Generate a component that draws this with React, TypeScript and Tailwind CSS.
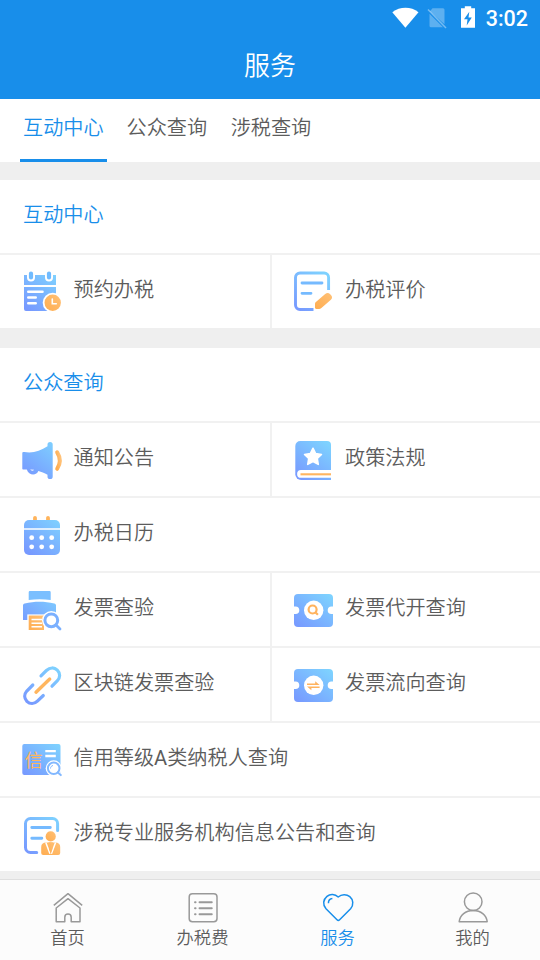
import { useState } from "react";
import type { ReactNode } from "react";

const BLUE = "url(#blue)";
const ORANGE = "url(#orange)";

const tabs = ["互动中心", "公众查询", "涉税查询"];

type Item = { label: ReactNode; key: string; icon: ReactNode };

// 各功能图标
const icons = {
  booking: (
    <>
      <path d="M4 7h32v10H4zM4 19h32v24H6a2 2 0 0 1-2-2z" fill={BLUE} />
      <path d="M11 5.5v4M29 5.5v4" stroke="#fff" strokeWidth="8" strokeLinecap="round" />
      <path d="M11 5.5v4M29 5.5v4" stroke="#70bbff" strokeWidth="4.2" strokeLinecap="round" />
      <path d="M8.3 23.7h14.2M8.3 29.5h7.4M8.3 35.3h7.4" stroke="#fff" strokeWidth="2.6" strokeLinecap="round" />
      <circle cx="32.7" cy="34.7" r="10" fill="#fff" />
      <circle cx="32.7" cy="34.7" r="8.2" fill={ORANGE} />
      <path d="M32.3 31v4.7h4" stroke="#fff" strokeWidth="1.6" strokeLinecap="round" />
    </>
  ),
  review: (
    <>
      <path d="M38.6 22V9.5a4.5 4.5 0 0 0-4.5-4.5H10a4.5 4.5 0 0 0-4.5 4.5V37a4.5 4.5 0 0 0 4.5 4.5h13.5" stroke={BLUE} strokeWidth="2.9" />
      <path d="M12 15h20M12 25.3h9" stroke="#75baff" strokeWidth="2.8" strokeLinecap="round" />
      <path d="m25.600 34.300 9.600-8.200c1.700-1.400 3.400-1.300 5 .2 2.200 1.900 2.500 3.900.7 5.500l-9.500 8.200c-1 .8-1.700 1-2.800 1h-2.200c-1 0-1.400-.5-1.400-1.400v-2.500c0-1.200 0-2 .6-2.800z" fill={ORANGE} />
    </>
  ),
  notice: (
    <>
      <path d="M2.3 17.2c0-1.2.8-1.5 2-1.2 8 1.6 16-.8 23.2-5.7V8.5a2.6 2.6 0 0 1 5.2 0v32a2.6 2.6 0 0 1-5.2 0v-1.8c-3.2-1.7-6-3-9.2-3.8-1.2 4.6-9.5 5.3-11.5-1.4H3.5c-.8 0-1.2-.4-1.2-1.1z" fill={BLUE} />
      <path d="M10.2 33.6c.8 1.4 3.1 1.4 3.9.1z" fill="#fff" />
      <path d="M37.2 16.3c3.2 5 3.2 11.4 0 16.5" stroke={ORANGE} strokeWidth="4" strokeLinecap="round" />
    </>
  ),
  policy: (
    <>
      <path d="M5.3 10a5 5 0 0 1 5-5H37a4 4 0 0 1 4 4v35H11a5.7 5.7 0 0 1-5.7-5.7z" fill={BLUE} />
      <path d="M41 34H11a3.9 3.9 0 0 0 0 7.8h30z" fill="#fff" />
      <path d="M10.5 38.3H41" stroke="#ffb560" strokeWidth="2.1" />
      <path d="m23 12.2 2.7 5.3 5.8.9-4.2 4.1 1 5.9-5.3-2.7-5.3 2.7 1-5.9-4.2-4.1 5.8-.9z" fill="#fff" stroke="#fff" strokeWidth="1.5" strokeLinejoin="round" />
    </>
  ),
  calendar: (
    <>
      <path d="M15 6.8V12M28 6.8V12" stroke="#ffb45c" strokeWidth="3.8" strokeLinecap="round" />
      <rect x="4" y="9" width="36" height="35" rx="5" fill={BLUE} />
      <path d="M4 18h36" stroke="#fff" strokeWidth="1.4" />
      {[11.7, 21.7, 31.7].map((x) => (
        <g key={x} fill="#fff">
          <circle cx={x} cy="26.7" r="2.4" />
          <circle cx={x} cy="35.8" r="2.4" />
        </g>
      ))}
    </>
  ),
  verify: (
    <>
      <path d="M8.7 14V6.2A1.2 1.2 0 0 1 9.900 5h19.600a1.200 1.200 0 0 1 1.200 1.200V14c-7-1-15-1-22 0z" fill="#7bbfff" />
      <path d="M3 19.500c0-1.100.6-1.800 1.700-2 10-2.200 19.600-2.200 29.600 0 1.100.2 1.700.9 1.700 2V34H3z" fill={BLUE} />
      <path d="M7.300 28.400h25V44h-25z" fill="#fff" />
      <path d="M8.700 29.500H24V44H8.700z" fill={ORANGE} />
      <path d="M11.500 33.500H22M11.500 37.200H22M11.500 40.700H22" stroke="#fff" strokeWidth="1.4" />
      <circle cx="31.3" cy="34.3" r="9.3" fill="#fff" />
      <circle cx="31.3" cy="34.3" r="6.4" fill="#fff" stroke="#7bb0ff" strokeWidth="3" />
      <path d="m36 39 4 4" stroke="#7bb0ff" strokeWidth="2.8" strokeLinecap="round" />
    </>
  ),
  chain: (
    <>
      <path d="m21 14.800 5.400-5.300c3.700-3.400 8-3.200 10.900-.4 3.200 3.100 3.100 7.600-.1 10.800L32 25.200M12.800 24l-6 6c-2.900 3.300-2.700 7.400.1 10.300 3 2.900 7.400 2.900 10.500-.1l5.900-5.700" stroke={BLUE} strokeWidth="3.2" strokeLinecap="round" />
      <path d="m16 31.200 13.700-13.100" stroke="#ffb65f" strokeWidth="3.4" strokeLinecap="round" />
    </>
  ),
  issue: (
    <>
      <Ticket />
      <circle cx="22.6" cy="23.5" r="4" stroke="#ffb35e" strokeWidth="2.2" />
      <path d="m25.300 26.200 2.600 2.500" stroke="#ffb35e" strokeWidth="2.2" />
    </>
  ),
  flow: (
    <>
      <Ticket />
      <path d="M17 22.400h8.200v-2.200l4.400 3.700H17zM29.600 25.600H17l4.400 3.600V27h8.200z" fill="#ffb35e" />
    </>
  ),
  credit: (
    <>
      <rect x="2.3" y="8" width="38.2" height="31" rx="2" fill={BLUE} />
      <text x="4.8" y="31" fontSize="18" fill="#ffb661" className="font-normal">信</text>
      <path d="M25.300 15.200h10.500M25.300 20h10.500" stroke="#fff" strokeWidth="2.3" />
      <circle cx="33.7" cy="32.3" r="8" fill="#fff" />
      <path d="m38 37 3 2.700" stroke="#fff" strokeWidth="4" />
      <circle cx="33.7" cy="32.3" r="5.8" stroke="#82b8ff" strokeWidth="2" />
      <path d="m37.800 36.400 3 2.700" stroke="#82b8ff" strokeWidth="2" strokeLinecap="round" />
      <path d="M30.500 32.500c0-1.600 1-2.700 2.500-3" stroke="#82b8ff" strokeWidth="1" />
    </>
  ),
  agency: (
    <>
      <path d="M37.600 19.500v-7a5 5 0 0 0-5-5H10.500a5 5 0 0 0-5 5v24a5 5 0 0 0 5 5h6.200" stroke={BLUE} strokeWidth="3" strokeLinecap="round" />
      <path d="M11.800 16.500h18.500M11.800 27.300h10" stroke="#75baff" strokeWidth="2.9" strokeLinecap="round" />
      <circle cx="30.7" cy="25.4" r="5.1" fill={ORANGE} />
      <path d="M21.200 36c0-3 1.800-4.600 4.800-4.600h9.400c3 0 4.800 1.600 4.800 4.600v6a2 2 0 0 1-2 2h-15a2 2 0 0 1-2-2z" fill={ORANGE} />
      <path d="m25.800 31.500 4.200 11.200M35.600 31.500l-4.200 11.200" stroke="#fff" strokeWidth="1.5" />
      <path d="m28.200 31.300 1.700 2-1 4.500 1.800 5.200 1.800-5.200-1-4.500 1.700-2z" fill={ORANGE} />
    </>
  ),
};

const groups: { title: string; rows: Item[][] }[] = [
  {
    title: "互动中心",
    rows: [
      [
        { key: "booking", label: "预约办税", icon: icons.booking },
        { key: "review", label: "办税评价", icon: icons.review },
      ],
    ],
  },
  {
    title: "公众查询",
    rows: [
      [
        { key: "notice", label: "通知公告", icon: icons.notice },
        { key: "policy", label: "政策法规", icon: icons.policy },
      ],
      [{ key: "calendar", label: "办税日历", icon: icons.calendar }],
      [
        { key: "verify", label: "发票查验", icon: icons.verify },
        { key: "issue", label: "发票代开查询", icon: icons.issue },
      ],
      [
        { key: "chain", label: "区块链发票查验", icon: icons.chain },
        { key: "flow", label: "发票流向查询", icon: icons.flow },
      ],
      [
        {
          key: "credit",
          label: (
            <>
              信用等级<span className="font-normal">A</span>类纳税人查询
            </>
          ),
          icon: icons.credit,
        },
      ],
      [{ key: "agency", label: "涉税专业服务机构信息公告和查询", icon: icons.agency }],
    ],
  },
];

const navItems: Item[] = [
  {
    key: "home",
    label: "首页",
    icon: (
      <>
        <path d="M1.800 14.300 16 2.700l14.200 11.600" />
        <path d="M4.200 30.700V17L16 7.700 28 17v13.700h-8.800v-4.500a3.200 3.200 0 0 0-6.400 0v4.500z" />
      </>
    ),
  },
  {
    key: "tax",
    label: "办税费",
    icon: (
      <>
        <rect x="2.2" y="2.8" width="27.8" height="28" rx="3.2" />
        <path d="M12.500 11.300h12.300M12.500 17.300h12.300M12.500 23.300h12.300M8 11.300h.6M8 17.300h.6M8 23.300h.6" strokeWidth="1.9" strokeLinecap="round" />
      </>
    ),
  },
  {
    key: "service",
    label: "服务",
    icon: (
      <>
        <path d="M16.200 6C13 3 8.200 2.700 5 5.300 1.300 8.300.3 13.500 4 17.800l11 11c.9.9 1.700.9 2.600 0l11-11c3.300-4 2.700-9.200-.8-12.200C24.500 3 19.600 3.100 16.200 6z" />
        <path d="M6.400 12.300c0-2.700 1.600-4.500 4-4.700" />
      </>
    ),
  },
  {
    key: "me",
    label: "我的",
    icon: (
      <>
        <circle cx="16.2" cy="10.7" r="8.8" />
        <path d="M2.200 30.700C3 24 8.500 19.500 16.200 19.500S29.400 24 30.200 30.700z" />
      </>
    ),
  },
];

export default function App() {
  const [tab, setTab] = useState(0);
  const [nav, setNav] = useState(2);

  return (
    <div className="flex h-[960px] w-[540px] flex-col overflow-hidden bg-[#efefef] font-['Roboto','Noto_Sans_CJK_SC',sans-serif] font-[350] text-[#5c5c5c]">
      {/* 渐变定义 */}
      <svg width="0" height="0" className="absolute">
        <defs>
          <linearGradient id="blue" gradientUnits="userSpaceOnUse" x1="8" y1="42" x2="36" y2="6">
            <stop stopColor="#7799ff" />
            <stop offset="1" stopColor="#7ed2ff" />
          </linearGradient>
          <linearGradient id="orange" x1="0" y1="1" x2="1" y2="0">
            <stop stopColor="#ffad50" />
            <stop offset="1" stopColor="#ffc177" />
          </linearGradient>
        </defs>
      </svg>

      <header className="h-[99px] shrink-0 bg-[#188eea] text-white">
        <div className="flex h-9 items-center justify-end pr-3">
          <svg width="86" height="24" viewBox="0 0 86 24" fill="none" className="mr-2">
            <path d="M.3 6.200C8 .3 19 .3 26.500 6.200L13.400 21.800z" fill="#fff" />
            <path d="m40.500 2.200H51q1.500 0 1.500 1.500v14.600L38 5.200zM37.500 7.800 51 21.200H39q-1.500 0-1.500-1.500z" fill="#fff" opacity=".3" />
            <path d="m36 3.500 18 18.500" stroke="#fff" strokeWidth="1.5" opacity=".4" />
            <path d="M69 2.200h3.800V.2h6.400v2H83v19.600H69z" fill="#fff" />
            <path d="M77.300 5.700 72 13.200h3.500l-.8 6.300 5.100-8h-3.300z" fill="#188eea" />
          </svg>
          <span className="pt-0.5 font-[Roboto] text-[21.5px] leading-6 font-medium">3:02</span>
        </div>
        <h1 className="pt-[10px] text-center text-[26px] leading-10">服务</h1>
      </header>

      <nav className="flex h-[63px] shrink-0 bg-white pl-[19.5px] text-[20.15px]">
        {tabs.map((label, i) => (
          <button
            key={label}
            onClick={() => setTab(i)}
            className={`mr-[15.5px] flex h-[63px] items-start border-b-3 pt-[14px] leading-[30px] ${
              i === tab ? "border-[#188eea] px-[3.5px] text-[#188eea]" : "border-transparent px-1"
            }`}
          >
            {label}
          </button>
        ))}
      </nav>

      <main className="flex min-h-0 flex-1 flex-col gap-5 overflow-hidden pt-[18px] text-[20.15px]">
        {groups.map((group) => (
          <section key={group.title} className="shrink-0 bg-white">
            <h2 className="h-[73px] pt-5 pl-[23px] leading-[30px] text-[#188eea]">{group.title}</h2>
            {group.rows.map((row) => (
              <div key={row[0].key} className="flex h-[75px] border-t-2 border-[#f1f1f1]">
                {row.map((item, i) => (
                  <button
                    key={item.key}
                    className={`flex items-start pt-[13px] text-left ${
                      i > 0
                        ? "flex-1 border-l-2 border-[#f1f1f1] pl-[18px]"
                        : row.length > 1
                          ? "w-[270px] pl-5"
                          : "w-full pl-5"
                    }`}
                  >
                    <svg width="46" height="46" viewBox="0 0 46 46" fill="none" className="shrink-0">
                      {item.icon}
                    </svg>
                    <span className={`pt-[7px] leading-[30px] ${i > 0 ? "pl-[9px]" : "pl-[7.5px]"}`}>
                      {item.label}
                    </span>
                  </button>
                ))}
              </div>
            ))}
          </section>
        ))}
      </main>

      <footer className="flex h-[81px] shrink-0 border-t border-[#dfdfdf] bg-[#fcfcfc]">
        {navItems.map((item, i) => (
          <button
            key={item.key}
            onClick={() => setNav(i)}
            className={`flex flex-1 flex-col items-center pt-[11px] ${i === nav ? "text-[#188eea]" : ""}`}
          >
            <svg
              width="32"
              height="32"
              viewBox="0 0 32 32"
              fill="none"
              stroke={i === nav ? "#188eea" : "#999"}
              strokeWidth="1.5"
              strokeLinejoin="round"
            >
              {item.icon}
            </svg>
            <span className="pt-[3px] text-[17.3px] leading-6">{item.label}</span>
          </button>
        ))}
      </footer>
    </div>
  );
}

function Ticket() {
  return (
    <>
      <rect x="4" y="8" width="39" height="33" rx="4" fill={BLUE} />
      <path d="M4 20.500h1.500a3.800 3.800 0 0 1 0 7.600H4zM43 20.500h-1.500a3.800 3.800 0 0 0 0 7.600H43z" fill="#fff" />
      <circle cx="23.7" cy="24.3" r="9.7" fill="#fff" />
    </>
  );
}
